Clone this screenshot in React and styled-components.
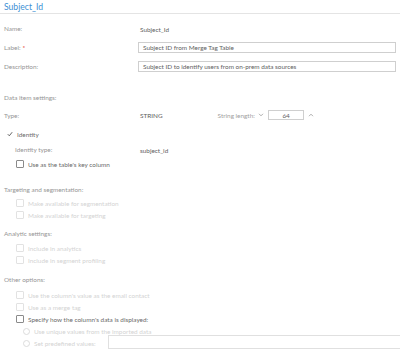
import styled, { createGlobalStyle } from 'styled-components'

const GlobalStyle = createGlobalStyle`
  body {
    margin: 0;
    background: #fff;
    font-family: Lato, "Open Sans", sans-serif;
    color: #666;
  }
`;

const Page = styled.div`
  width: 400px;
  height: 355px;
  overflow: hidden;
  padding: 0 0 0 4px;
  box-sizing: border-box;
`;

const Title = styled.div`
  height: 13px;
  line-height: 14px;
  font-size: 8.6px;
  color: #3d8fd4;
  border-bottom: 1px solid #e4e4e4;
  margin-left: -4px;
  padding-left: 4px;
`;

const Form = styled.div`
  display: flex;
  flex-direction: column;
  padding-top: 7px;
`;

// label / value rows at the top
const FieldRow = styled.div`
  display: grid;
  grid-template-columns: 134px 1fr;
  align-items: center;
  height: ${p => p.$h ?? 14}px;
  margin-bottom: ${p => p.$gap ?? 5}px;
  font-size: 6.4px;
`;

const Label = styled.span`
  color: #959595;
  padding-left: ${p => p.$indent ?? 0}px;
`;

const Required = styled.span`
  color: #e0302a;
  margin-left: 2px;
`;

const Value = styled.div`
  display: flex;
  align-items: center;
  color: #5e5e5e;
  padding-left: 2px;
  padding-top: ${p => p.$drop ?? 0}px;
`;

const TextInput = styled.div`
  height: 11px;
  border: 1px solid #cfcfcf;
  box-sizing: border-box;
  margin-right: 4px;
  padding-left: 4px;
  display: flex;
  align-items: center;
  color: #5e5e5e;
  font-size: 6.4px;
`;

const SectionTitle = styled.div`
  height: 12px;
  display: flex;
  align-items: center;
  font-size: 6.4px;
  color: #959595;
  margin-top: ${p => p.$top ?? 0}px;
  margin-bottom: ${p => p.$bottom ?? 2}px;
`;

const Spinner = styled.div`
  display: flex;
  align-items: center;
  padding-left: 55px;
  color: #a0a0a0;
`;

const SpinInput = styled.div`
  width: 36px;
  height: 10px;
  border: 1px solid #cfcfcf;
  box-sizing: border-box;
  margin: 0 4px 0 4px;
  display: flex;
  align-items: center;
  justify-content: center;
  color: #5e5e5e;
`;

const CheckRow = styled.div`
  display: flex;
  align-items: center;
  height: ${p => p.$h ?? 12}px;
  padding-left: ${p => p.$indent ?? 12}px;
  font-size: 6.4px;
  color: ${p => (p.$disabled ? '#d3d3d3' : '#6a6a6a')};
`;

const Box = styled.span`
  width: 6px;
  height: 6px;
  border: 1px solid ${p => (p.$disabled ? '#e2e2e2' : '#8a8a8a')};
  border-radius: 1px;
  margin-right: 4px;
  flex: none;
`;

const Radio = styled.span`
  width: 5px;
  height: 5px;
  border: 1px solid #dcdcdc;
  border-radius: 50%;
  margin-right: 4px;
  flex: none;
`;

const Tick = styled.span`
  width: 8px;
  margin-right: 2px;
  display: flex;
  align-items: center;
`;

const WideInput = styled.div`
  flex: 1;
  height: 14px;
  border: 1px solid #e0e0e0;
  border-right: none;
  box-sizing: border-box;
  margin-left: 12px;
  margin-top: -2px;
`;

const Chevron = ({ up }) => (
  <svg width="6" height="4" viewBox="0 0 6 4">
    <path d={up ? 'M1 3.2L3 1.2L5 3.2' : 'M1 0.8L3 2.8L5 0.8'} fill="none" stroke="#999" strokeWidth="0.8" />
  </svg>
);

const Check = ({ label, disabled }) => (
  <CheckRow $disabled={disabled}>
    <Box $disabled={disabled} />
    {label}
  </CheckRow>
);

const Opt = ({ label, children }) => (
  <CheckRow $disabled $indent={19}>
    <Radio />
    {label}
    {children}
  </CheckRow>
);

export default function App() {
  return (
    <Page>
      <GlobalStyle />
      <Title>Subject_Id</Title>
      <Form>
        <FieldRow>
          <Label>Name:</Label>
          <Value $drop={2}>Subject_Id</Value>
        </FieldRow>
        <FieldRow>
          <Label>Label:<Required>*</Required></Label>
          <TextInput>Subject ID from Merge Tag Table</TextInput>
        </FieldRow>
        <FieldRow $gap={0}>
          <Label>Description:</Label>
          <TextInput>Subject ID to identify users from on-prem data sources</TextInput>
        </FieldRow>

        <SectionTitle $top={18} $bottom={5}>Data item settings:</SectionTitle>
        <FieldRow>
          <Label>Type:</Label>
          <Value>
            STRING
            <Spinner>
              String length:&nbsp;&nbsp;
              <Chevron />
              <SpinInput>64</SpinInput>
              <Chevron up />
            </Spinner>
          </Value>
        </FieldRow>
        <CheckRow $indent={3} $h={14}>
          <Tick>
            <svg width="6" height="6" viewBox="0 0 6 6">
              <path d="M0.8 3.2L2.3 4.8L5.2 1.2" fill="none" stroke="#555" strokeWidth="0.9" />
            </svg>
          </Tick>
          Identity
        </CheckRow>
        <FieldRow $gap={0} $h={17}>
          <Label $indent={11}>Identity type:</Label>
          <Value $drop={1}>subject_id</Value>
        </FieldRow>
        <Check label="Use as the table's key column" />

        <SectionTitle $top={13}>Targeting and segmentation:</SectionTitle>
        <Check disabled label="Make available for segmentation" />
        <Check disabled label="Make available for targeting" />

        <SectionTitle $top={6} $bottom={3}>Analytic settings:</SectionTitle>
        <Check disabled label="Include in analytics" />
        <Check disabled label="Include in segment profiling" />

        <SectionTitle $top={7} $bottom={4}>Other options:</SectionTitle>
        <Check disabled label="Use the column's value as the email contact" />
        <Check disabled label="Use as a merge tag" />
        <Check label="Specify how the column's data is displayed:" />
        <Opt label="Use unique values from the imported data" />
        <Opt label="Set predefined values:">
          <WideInput />
        </Opt>
      </Form>
    </Page>
  );
}
